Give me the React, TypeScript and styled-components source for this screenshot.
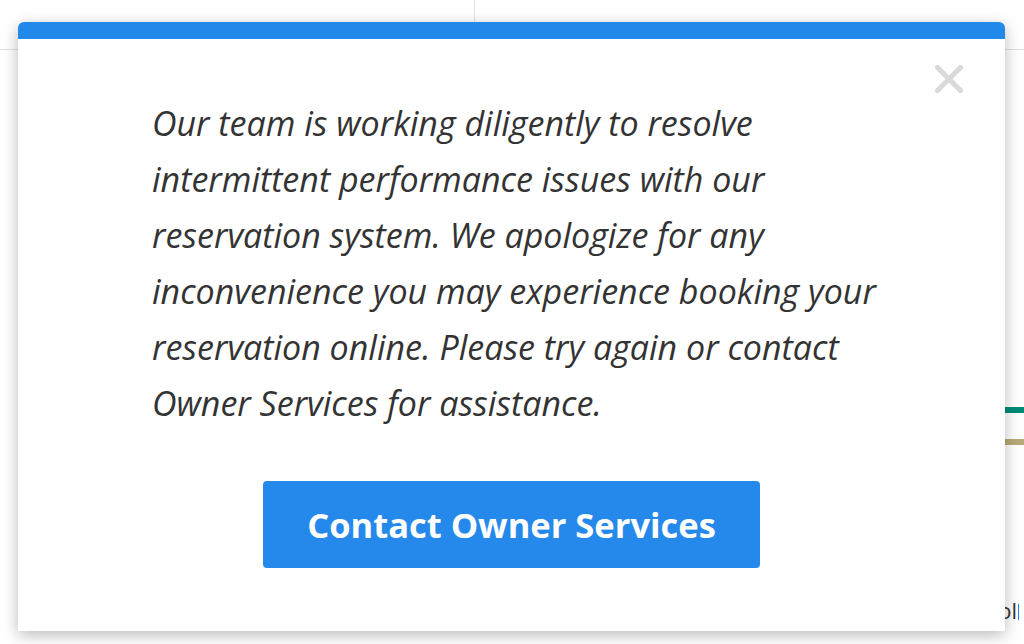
import React from "react";
import styled, { createGlobalStyle } from "styled-components";

const Global = createGlobalStyle`
  html, body { margin: 0; padding: 0; background: #ffffff; }
  body { font-family: "Open Sans", "Noto Sans", sans-serif; color: #333; }
  * { box-sizing: border-box; }
`;

const Page = styled.div`
  position: relative;
  width: 1024px;
  height: 644px;
  overflow: hidden;
  background: #ffffff;
  display: flex;
  flex-direction: column;
`;

const Header = styled.header`
  height: 50px;
  flex: none;
  display: flex;
  border-bottom: 1px solid #e2e2e2;
`;

const HeaderCell = styled.div<{ $w: number }>`
  width: ${(p) => p.$w}px;
  border-right: 1px solid #e0e0e0;
`;

const Body = styled.main`
  flex: 1;
  display: flex;
  justify-content: flex-end;
`;

const Aside = styled.aside`
  width: 80px;
  display: flex;
  flex-direction: column;
  align-items: stretch;
`;

const Rule = styled.div<{ $color: string; $top: number }>`
  height: 6px;
  margin-top: ${(p) => p.$top}px;
  background: ${(p) => p.$color};
`;

const Snippet = styled.div`
  margin-top: 150px;
  padding-right: 5px;
  text-align: right;
  white-space: nowrap;
  font-family: "Open Sans", sans-serif;
  font-size: 22px;
  line-height: 30px;
  color: #333;
`;

const Caret = styled.span`
  display: inline-block;
  width: 1px;
  height: 16px;
  margin-left: 1px;
  vertical-align: -1px;
  background: #2288ea;
`;

const Modal = styled.section`
  position: absolute;
  top: 22px;
  left: 18px;
  width: 987px;
  height: 609px;
  background: #ffffff;
  border-top: 17px solid #2288ea;
  border-radius: 6px 6px 0 0;
  box-shadow: 0 4px 16px rgba(0, 0, 0, 0.28);
  display: flex;
  flex-direction: column;
  align-items: center;
  padding-top: 56px;
`;

const Close = styled.button`
  position: absolute;
  top: 26px;
  right: 42px;
  width: 28px;
  height: 28px;
  padding: 0;
  border: 0;
  background: transparent;
  cursor: pointer;
  display: flex;
`;

const Message = styled.p`
  margin: 0 0 0 134px;
  align-self: flex-start;
  width: 740px;
  font-family: "Open Sans", "Noto Sans", sans-serif;
  font-style: italic;
  font-weight: 400;
  font-size: 34px;
  line-height: 56px;
  color: #333;
`;

const Action = styled.button`
  margin-top: 50px;
  width: 497px;
  height: 87px;
  border: 0;
  border-radius: 4px;
  background: #2489eb;
  color: #ffffff;
  font-family: "Open Sans", sans-serif;
  font-weight: 700;
  font-size: 34.5px;
  cursor: pointer;
`;

export default function App() {
  return (
    <>
      <Global />
      <Page>
        <Header>
          <HeaderCell $w={475} />
        </Header>
        <Body>
          <Aside>
            <Rule $color="#008b7a" $top={357} />
            <Rule $color="#b8aa7a" $top={26} />
            <Snippet>
              ol<Caret />
            </Snippet>
          </Aside>
        </Body>
        <Modal role="dialog" aria-modal="true">
          <Close aria-label="Close">
            <svg width="28" height="28" viewBox="0 0 28 28">
              <path d="M2.5 2.5 L25.5 25.5 M25.5 2.5 L2.5 25.5" stroke="#d9d9d9" strokeWidth="5" strokeLinecap="square" />
            </svg>
          </Close>
          <Message>
            Our team is working diligently to resolve intermittent performance issues with our
            reservation system. We apologize for any inconvenience you may experience booking your
            reservation online. Please try again or contact Owner Services for assistance.
          </Message>
          <Action>Contact Owner Services</Action>
        </Modal>
      </Page>
    </>
  );
}
